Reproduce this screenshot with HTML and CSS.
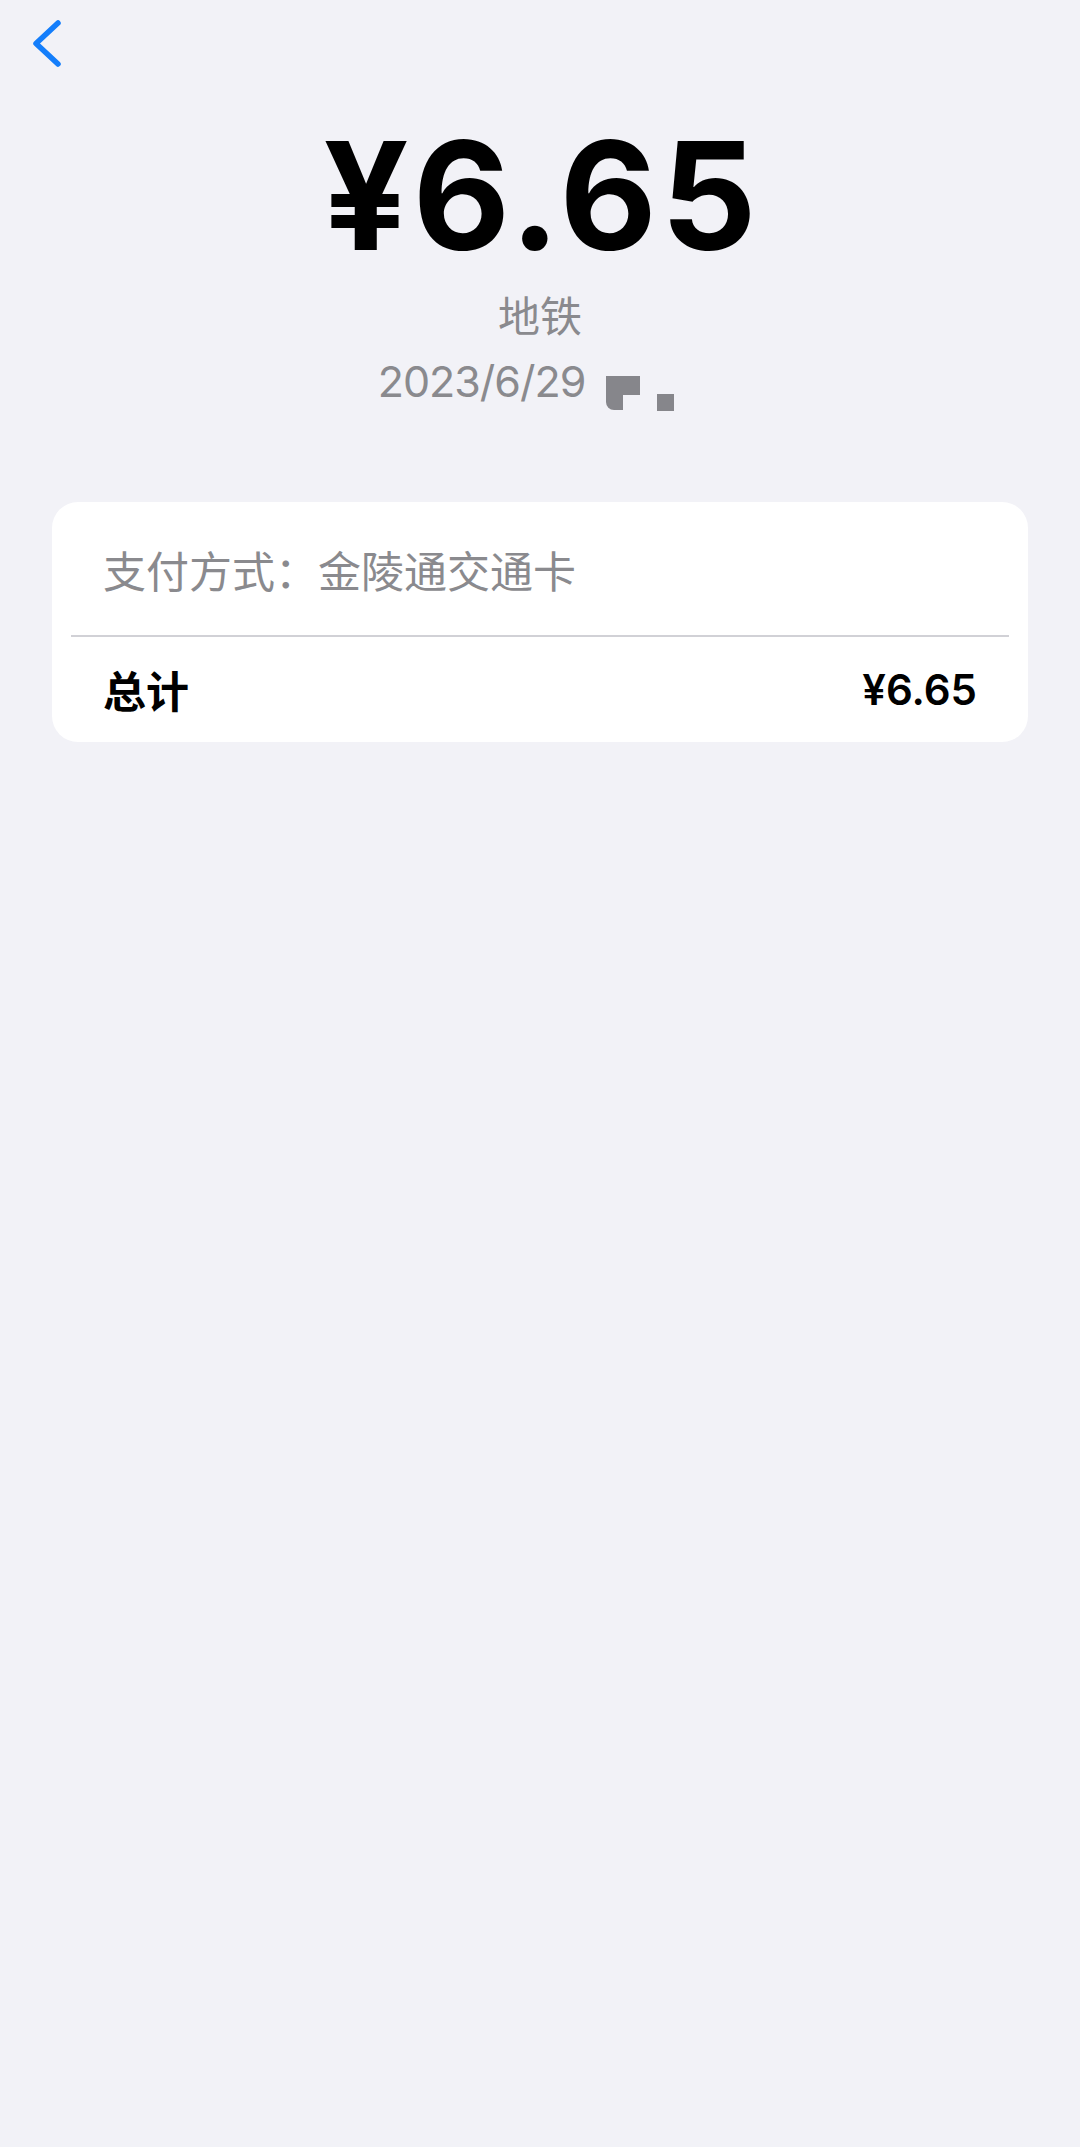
FILE: index.html
```html
<!DOCTYPE html>
<html lang="zh-CN">
<head>
    <meta charset="UTF-8">
    <meta name="viewport" content="width=device-width, initial-scale=1.0">
    <title>交易详情</title>
    <link rel="stylesheet" href="styles.css">
</head>
<body>
    <div class="nav">
        <svg class="back" width="40" height="50" viewBox="0 0 40 50">
            <path d="M28 5 L6 25.5 L28 46" fill="none" stroke="#147efb" stroke-width="5.5" stroke-linecap="round" stroke-linejoin="round"/>
        </svg>
    </div>

    <div class="summary">
        <div class="amount">¥6.65</div>
        <div class="merchant">地铁</div>
        <div class="date">
            <span>2023/6/29</span>
            <span class="redact">
                <span class="blot-a"></span>
                <span class="blot-b"></span>
            </span>
        </div>
    </div>

    <div class="card">
        <div class="row row-method">
            <span class="method">支付方式：金陵通交通卡</span>
        </div>
        <div class="divider"></div>
        <div class="row row-total">
            <span class="total-label">总计</span>
            <span class="total-value">¥6.65</span>
        </div>
    </div>
</body>
</html>
```

FILE: styles.css
```css
body {
    font-family: "Inter", "Noto Sans CJK SC", sans-serif;
    background-color: #f2f2f7;
    margin: 0;
    padding: 0;
    color: #000;
}
.nav {
    height: 100px;
    padding: 18px 0 0 30px;
    box-sizing: border-box;
}
.back {
    display: block;
}
.summary {
    text-align: center;
}
.amount {
    margin-top: 15px;
    padding-left: 4px;
    font-size: 150px;
    font-weight: 700;
    line-height: 162px;
    letter-spacing: 4px;
}
.merchant {
    margin-top: 14px;
    font-size: 42px;
    line-height: 52px;
    color: #8a8a8e;
}
.date {
    display: flex;
    justify-content: center;
    align-items: center;
    margin-top: 8px;
    font-size: 43px;
    line-height: 60px;
    color: #8a8a8e;
    letter-spacing: -1px;
}
.redact {
    display: flex;
    align-items: flex-start;
    margin-left: 21px;
    margin-right: 28px;
    width: 68px;
    height: 46px;
    padding-top: 18px;
    box-sizing: border-box;
}
.blot-a {
    width: 34px;
    height: 34px;
    background: linear-gradient(#86868b, #86868b) 0 0 / 34px 19px no-repeat,
                linear-gradient(#86868b, #86868b) 0 0 / 17px 34px no-repeat;
    border-bottom-left-radius: 8px;
}
.blot-b {
    width: 17px;
    height: 17px;
    margin-top: 18px;
    margin-left: 17px;
    background-color: #86868b;
}
.card {
    margin: 0 52px;
    margin-top: 91px;
    background-color: #fff;
    border-radius: 26px;
}
.row {
    display: flex;
    align-items: center;
    justify-content: space-between;
    padding: 0 51px;
}
.row-method {
    height: 133px;
}
.method {
    font-size: 43px;
    color: #8a8a8e;
}
.divider {
    height: 1.5px;
    margin: 0 19px;
    background-color: #d1d1d6;
}
.row-total {
    height: 105px;
}
.total-label {
    font-size: 43px;
    font-weight: 700;
}
.total-value {
    font-size: 42px;
    font-weight: 600;
}
```
